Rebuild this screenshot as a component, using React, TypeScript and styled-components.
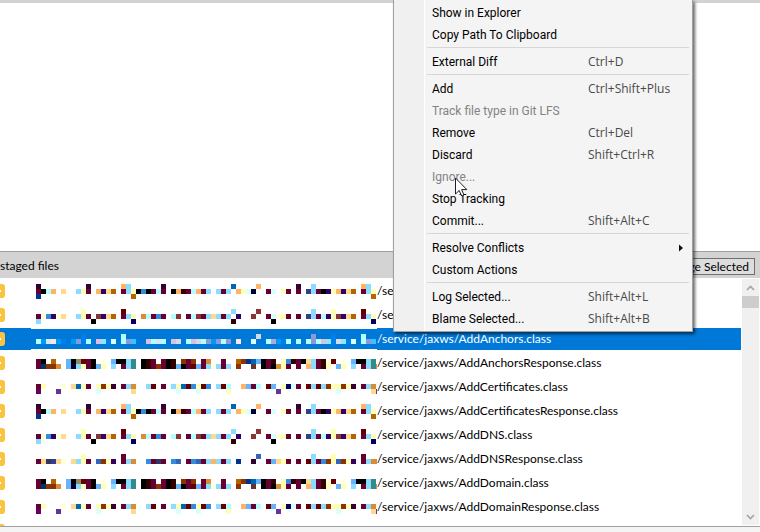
import React from "react";
import styled, { createGlobalStyle, css } from "styled-components";

const GlobalStyle = createGlobalStyle`
  *, *::before, *::after { box-sizing: border-box; }
  body {
    margin: 0;
    background: #fff;
    color: #000;
    font: 12px/16px Lato, "Open Sans", sans-serif;
  }
  button { font: inherit; color: inherit; }
`;

/* ---------- data ---------- */

const PALETTE: Record<string, string> = {
  m: "#660033", d: "#330033", k: "#000000", c: "#b3ffff", o: "#ffb366",
  y: "#ffd98c", b: "#8cdcff", l: "#ffffb3", v: "#330066", g: "#b36600",
  s: "#338ce0", r: "#330000", i: "#d9ffff", n: "#000033", e: "#333f8c",
  u: "#0066b3", w: "#003391", p: "#660000", j: "#ffffd9", q: "#8c3333",
  a: "#d98c33", h: "#8c3300", z: "#000066", x: "#333366", t: "#3366b8",
  B: "#66b3ff", K: "#8c8c66", T: "#338c8c", M: "#003366", N: "#663333",
  P: "#660066", Q: "#663399", C: "#0099f5", D: "#d9e6f2", E: "#ffe6e6",
  F: "#0080f0", G: "#8c99d9", H: "#d9bfe0", I: "#8ce6ff", J: "#d9d9e6",
  L: "#40bfff", O: "#b3a6d9",
};

type Pattern = { top: number; lines: string[] };

/* Each token is a column number followed by a palette key. */
const PATTERNS: Record<string, Pattern> = {
  first: {
    top: 5,
    lines: [
      "0d 10d 17o 18b 25d 39u 44o 52d 55b 65o 66b",
      "0m 1k 2c 3o 5y 8b 9l 10m 12o 13v 14y 15g 17m 18b 19l 20k 21s 22k 23m 24c 25m 27k 28o 29r 30m 31c 32o 33m 34b 36b 37m 38b 40o 41l 42i 43n 46m 47i 49l 50m 52m 54e 55b 56m 57k 58v 59l 60o 61v 62y 63g 65m 66b 67l",
      "0w 19g 67g",
    ],
  },
  second: {
    top: 6,
    lines: [
      "9l 17p 39b 44q 55b 59l 65p",
      "0m 1j 2s 3v 4j 5y 8b 9l 10m 12q 13v 14y 15g 17m 18b 19l 21a 22c 23m 24s 25m 27c 28q 30m 31c 32q 33m 34b 35y 36b 37m 38b 40v 43q 46m 47i 48j 49l 50m 52m 54e 55b 56m 57c 58v 59l 60q 61v 62y 63g 65m 66b 67l",
      "0b 11k 19z 39r 47k 67z",
    ],
  },
  third: {
    top: 7,
    lines: [
      "9l 17m 44t 55b 59l 65m",
      "0m 1y 2x 3e 4y 5j 7y 8b 9l 10m 12t 13h 14l 15v 17m 18b 19a 22s 23m 24x 25m 27s 28t 30m 31s 32t 33m 34b 35o 36b 37m 38b 40w 43d 46m 47B 48y 49l 50m 52m 54p 55b 56m 57s 58h 59l 60t 61h 62l 63v 65m 66b 67a 68a",
    ],
  },
  selected: {
    top: 7,
    lines: [
      "9F 17c 44J 55G 59F 65c",
      "0c 1C 2D 3E 4C 5F 7C 8G 9F 10c 12H 13I 14F 15i 17c 18G 19L 22H 23c 24D 25c 27H 28J 30c 31H 32J 33c 34G 35C 36G 37c 38G 40E 43i 46c 47O 48C 49F 50c 52c 54c 55G 56c 57H 58I 59F 60J 61I 62F 63i 65c 66G 67L",
    ],
  },
  fourth: {
    top: 8,
    lines: [
      "0m 1k 3g 6B 7k 8K 9p 10m 11k 13j 15B 16k 17k 18b 19T 21k 22r 23m 25m 26k 27r 29h 30m 31h 33m 34a 37m 40g 41h 42w 43u 44B 45k 46m 47r 49l 50s 51r 52m 53k 54y 55b 56m 57r 58j 59p 61j 63B 64k 65k 66b 67T",
      "0m 1M 2h 3h 4a 6B 7n 8b 9l 10m 11k 12B 13l 15b 17m 18b 19T 21k 22r 23m 24h 25m 26k 27r 28B 29k 30m 31p 32B 33m 34b 35j 36b 37m 38b 40h 43N 45k 46m 47k 48a 49l 50m 52m 54o 55b 56m 57r 58l 60B 61l 63b 65m 66b 67T 68a",
    ],
  },
  fifth: {
    top: 9,
    lines: [
      "0m 1l 5j 7y 8u 9l 10m 12l 13h 14l 15d 17m 18b 19a 22b 23p 25m 27b 28l 29u 30p 31s 32l 33p 34s 36b 37p 38c 41o 42B 43m 44c 46p 47B 49l 50z 51i 52m 54p 55b 56p 57b 58h 59l 60l 61h 62l 63d 65m 66b 67a",
      "0P 4Q 12i 19y 28i 32i 38l 48Q 60i 67y 68Q",
    ],
  },
};

type FileEntry = { path: string; pattern: string; selected?: boolean };

const FILES: FileEntry[] = [
  { path: "/se", pattern: "first" },
  { path: "/se", pattern: "second" },
  { path: "/service/jaxws/AddAnchors.class", pattern: "selected", selected: true },
  { path: "/service/jaxws/AddAnchorsResponse.class", pattern: "fourth" },
  { path: "/service/jaxws/AddCertificates.class", pattern: "fifth" },
  { path: "/service/jaxws/AddCertificatesResponse.class", pattern: "first" },
  { path: "/service/jaxws/AddDNS.class", pattern: "second" },
  { path: "/service/jaxws/AddDNSResponse.class", pattern: "third" },
  { path: "/service/jaxws/AddDomain.class", pattern: "fourth" },
  { path: "/service/jaxws/AddDomainResponse.class", pattern: "fifth" },
];

type MenuEntry = { label: string; keys?: string; disabled?: boolean; submenu?: boolean };

const MENU: MenuEntry[][] = [
  [{ label: "Show in Explorer" }, { label: "Copy Path To Clipboard" }],
  [{ label: "External Diff", keys: "Ctrl+D" }],
  [
    { label: "Add", keys: "Ctrl+Shift+Plus" },
    { label: "Track file type in Git LFS", disabled: true },
    { label: "Remove", keys: "Ctrl+Del" },
    { label: "Discard", keys: "Shift+Ctrl+R" },
    { label: "Ignore...", disabled: true },
    { label: "Stop Tracking" },
    { label: "Commit...", keys: "Shift+Alt+C" },
  ],
  [{ label: "Resolve Conflicts", submenu: true }, { label: "Custom Actions" }],
  [
    { label: "Log Selected...", keys: "Shift+Alt+L" },
    { label: "Blame Selected...", keys: "Shift+Alt+B" },
  ],
];

/* ---------- layout ---------- */

const Page = styled.main`
  position: relative;
  display: flex;
  flex-direction: column;
  min-height: 100vh;
  overflow: hidden;
`;

const UpperPane = styled.section`
  flex: 1;
  border-top: 3px solid #d3d3d3;
  background: #fff;
`;

const Header = styled.header`
  display: flex;
  align-items: center;
  justify-content: space-between;
  height: 27px;
  padding: 2px 5px 0 0;
  border-top: 1px solid #a0a0a0;
  background: #d3d3d3;
`;

const Title = styled.h2`
  margin: 0;
  font: inherit;
`;

const HeaderButton = styled.button`
  height: 17px;
  padding: 0 5px;
  border: 1px solid #707070;
  background: #dddddd;
  line-height: 15px;
`;

const ListPane = styled.section`
  display: flex;
  height: 248px;
  padding: 1px 1px 0 0;
  overflow: hidden;
`;

const FileList = styled.ul`
  flex: 1;
  margin: 0;
  padding: 0 1px 0 0;
  list-style: none;
`;

const FileRow = styled.li<{ $selected?: boolean }>`
  display: flex;
  height: 24px;
  padding: 1px 0;
  background: #fff;
  ${(p) =>
    p.$selected &&
    css`
      color: #fff;
      background: #0078d7;
      border: solid #fff;
      border-width: 1px 0;
      padding: 0;
    `}
`;

const BadgeCell = styled.span`
  flex: 0 0 31px;
  padding-top: 4px;
  line-height: 0;
`;

const MosaicCell = styled.span<{ $selected?: boolean }>`
  flex: 0 0 346px;
  height: 22px;
  padding-left: 5px;
  line-height: 0;
  border: solid #fff;
  border-width: 1px 0;
  background: ${(p) => (p.$selected ? "#0078d7" : "#fff")};
`;

const PathText = styled.span`
  flex: 1;
  line-height: 22px;
  white-space: nowrap;
`;

const ScrollBar = styled.div`
  display: flex;
  flex-direction: column;
  flex: 0 0 17px;
  height: 246px;
  background: #f0f0f0;
`;

const ScrollButton = styled.button`
  display: grid;
  place-items: center;
  height: 17px;
  padding: 0;
  border: 0;
  background: transparent;
`;

const ScrollTrack = styled.div`
  flex: 1;
`;

const ScrollThumb = styled.div`
  height: 12px;
  background: #cdcdcd;
`;

const StatusStrip = styled.footer`
  height: 6px;
  border-top: 1px solid #a0a0a0;
  background: #f4f4f4;
`;

const ContextMenu = styled.div`
  position: absolute;
  top: 0;
  left: 393px;
  width: 300px;
  padding: 2px 3px 1px 0;
  border: solid #a0a0a0;
  border-width: 0 1px 1px;
  background: linear-gradient(to right, #f0f0f0 30px, #ffffff 30px, #ffffff 31px, #f4f4f4 31px);
  box-shadow: 2px 2px 3px rgba(0, 0, 0, 0.6);
`;

const MenuGroup = styled.div`
  & + &::before {
    content: "";
    display: block;
    height: 5px;
    margin-left: 33px;
    background: linear-gradient(#d7d7d7, #d7d7d7) 0 1px / 100% 1px no-repeat;
  }
`;

const MenuItem = styled.button`
  display: grid;
  grid-template-columns: 156px 1fr 10px;
  align-items: center;
  width: 100%;
  height: 22px;
  padding: 0 0 0 38px;
  border: 0;
  background: transparent;
  font-family: Roboto, "Open Sans", sans-serif;
  text-align: left;
  white-space: nowrap;
  &:disabled { color: #838383; }
`;

const Shortcut = styled.span`
  color: #4a4a4a;
  font-family: "Open Sans", sans-serif;
`;

const Pointer = styled.svg`
  position: absolute;
  top: 177px;
  left: 455px;
`;

/* ---------- drawings ---------- */

function Badge() {
  return (
    <svg width="5" height="14" viewBox="0 0 5 14" aria-hidden="true">
      <rect x="-9" y="0" width="14" height="14" rx="3" fill="#f9c440" />
      <rect x="-5" y="6" width="6" height="2" fill="#fff" />
    </svg>
  );
}

function Mosaic({ pattern }: { pattern: Pattern }) {
  return (
    <svg width="341" height="20" viewBox="0 0 341 20" shapeRendering="crispEdges" aria-hidden="true">
      {pattern.lines.map((line, row) =>
        line.split(" ").map((token) => {
          const column = parseInt(token, 10);
          return (
            <rect
              key={`${row}-${column}`}
              x={column * 5}
              y={pattern.top - 2 + row * 5}
              width="5"
              height="5"
              fill={PALETTE[token[token.length - 1]]}
            />
          );
        })
      )}
    </svg>
  );
}

function Chevron({ down }: { down?: boolean }) {
  return (
    <svg width="9" height="6" viewBox="0 0 9 6" fill="none" stroke="#a3a3a3" strokeWidth="1.6" aria-hidden="true">
      <path d={down ? "M1 1l3.5 3.5L8 1" : "M1 5l3.5-3.5L8 5"} />
    </svg>
  );
}

/* ---------- app ---------- */

export default function App() {
  return (
    <Page>
      <GlobalStyle />
      <UpperPane />
      <Header>
        <Title>staged files</Title>
        <HeaderButton type="button">Stage Selected</HeaderButton>
      </Header>
      <ListPane>
        <FileList role="listbox" aria-label="staged files">
          {FILES.map((file, index) => (
            <FileRow key={index} role="option" aria-selected={!!file.selected} $selected={file.selected}>
              <BadgeCell><Badge /></BadgeCell>
              <MosaicCell $selected={file.selected}>
                <Mosaic pattern={PATTERNS[file.pattern]} />
              </MosaicCell>
              <PathText>{file.path}</PathText>
            </FileRow>
          ))}
          <FileRow aria-hidden="true">
            <BadgeCell><Badge /></BadgeCell>
          </FileRow>
        </FileList>
        <ScrollBar>
          <ScrollButton type="button" aria-label="Scroll up"><Chevron /></ScrollButton>
          <ScrollTrack><ScrollThumb /></ScrollTrack>
          <ScrollButton type="button" aria-label="Scroll down"><Chevron down /></ScrollButton>
        </ScrollBar>
      </ListPane>
      <StatusStrip />

      <ContextMenu role="menu">
        {MENU.map((group, index) => (
          <MenuGroup key={index} role="group">
            {group.map((item) => (
              <MenuItem key={item.label} type="button" role="menuitem" disabled={item.disabled}>
                <span>{item.label}</span>
                <Shortcut>{item.keys}</Shortcut>
                {item.submenu && (
                  <svg width="4" height="8" viewBox="0 0 4 8" aria-hidden="true">
                    <path d="M0 0.5L4 4L0 7.5Z" fill="#111" />
                  </svg>
                )}
              </MenuItem>
            ))}
          </MenuGroup>
        ))}
      </ContextMenu>

      <Pointer width="13" height="20" viewBox="0 0 13 20" aria-hidden="true">
        <path
          d="M0.5 1V17L4.2 13.5L6.7 19L9 18L6.6 12.6H11.8Z"
          fill="#fff"
          stroke="#1d1d2b"
          strokeWidth="1"
        />
      </Pointer>
    </Page>
  );
}
